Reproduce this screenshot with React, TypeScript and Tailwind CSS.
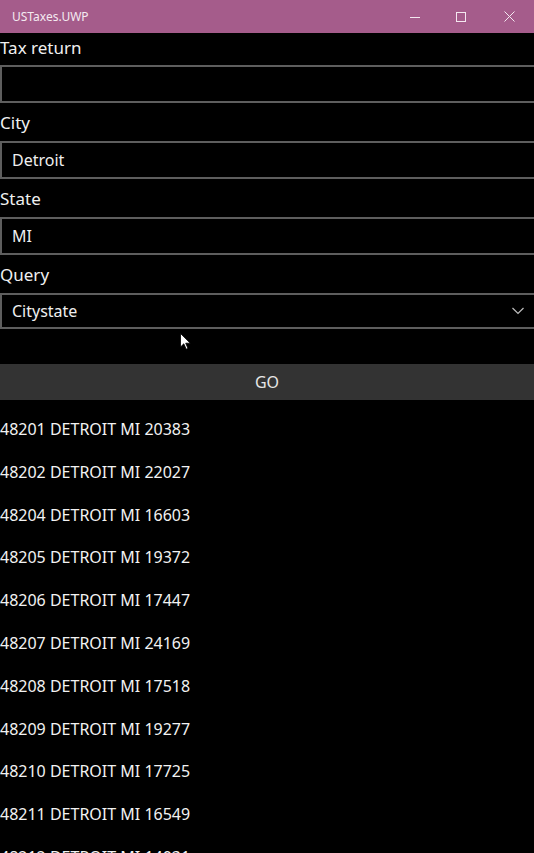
import React from "react";

const rows = [
  "48201 DETROIT MI 20383",
  "48202 DETROIT MI 22027",
  "48204 DETROIT MI 16603",
  "48205 DETROIT MI 19372",
  "48206 DETROIT MI 17447",
  "48207 DETROIT MI 24169",
  "48208 DETROIT MI 17518",
  "48209 DETROIT MI 19277",
  "48210 DETROIT MI 17725",
  "48211 DETROIT MI 16549",
  "48212 DETROIT MI 14031",
];

function Label({ children, first }: { children: React.ReactNode; first?: boolean }) {
  return (
    <div
      className={
        first
          ? "h-[32px] pb-[4px] flex items-center text-[17px] text-[#f0f0f0] leading-none"
          : "h-[38px] flex items-center text-[17px] text-[#f0f0f0] leading-none"
      }
    >
      {children}
    </div>
  );
}

function Field({ value }: { value?: string }) {
  return (
    <div className="h-[38px] border-y-2 border-l-2 border-[#5e5e5e] flex items-center pl-[10px] text-[16px] text-[#efefef]">
      {value}
    </div>
  );
}

export default function App() {
  return (
    <div
      className="w-[534px] h-[853px] bg-black overflow-hidden relative"
      style={{ fontFamily: '"Noto Sans", "Open Sans", sans-serif' }}
    >
      <div className="h-[33px] bg-[#a55c8b] flex items-center">
        <div className="pl-[12px] text-[12px] text-[#f4eaf1] flex-1">USTaxes.UWP</div>
        <div className="flex h-full">
          <div className="w-[46px] h-full flex items-center justify-center">
            <svg width="10" height="10" viewBox="0 0 10 10">
              <line x1="0" y1="5.5" x2="10" y2="5.5" stroke="#f4e8f0" strokeWidth="1" />
            </svg>
          </div>
          <div className="w-[46px] h-full flex items-center justify-center">
            <svg width="10" height="10" viewBox="0 0 10 10">
              <rect x="0.5" y="0.5" width="9" height="9" fill="none" stroke="#f4e8f0" strokeWidth="1" />
            </svg>
          </div>
          <div className="w-[50px] h-full flex items-center justify-center">
            <svg width="11" height="11" viewBox="0 0 11 11">
              <path d="M0.5 0.5 L10.5 10.5 M10.5 0.5 L0.5 10.5" stroke="#f4e8f0" strokeWidth="1" />
            </svg>
          </div>
        </div>
      </div>

      <Label first>Tax return</Label>
      <Field />
      <Label>City</Label>
      <Field value="Detroit" />
      <Label>State</Label>
      <Field value="MI" />
      <Label>Query</Label>
      <div className="h-[36px] border-2 border-r-0 border-[#5e5e5e] flex items-center pl-[10px] pr-[10px] text-[16px] text-[#efefef]">
        <span className="flex-1">Citystate</span>
        <svg width="12" height="8" viewBox="0 0 12 8">
          <path d="M0.5 1 L6 6.5 L11.5 1" fill="none" stroke="#bdbdbd" strokeWidth="1.2" />
        </svg>
      </div>

      <div className="h-[35px]" />
      <div className="h-[36px] bg-[#333333] flex items-center justify-center text-[16px] text-[#e6e6e6]">GO</div>

      <div className="pt-[7.6px] flex flex-col">
        {rows.map((r) => (
          <div key={r} className="h-[42.8px] shrink-0 flex items-center text-[16px] text-[#f2f2f2] whitespace-nowrap">
            {r}
          </div>
        ))}
      </div>

      <svg className="absolute left-[180px] top-[333px]" width="12" height="18" viewBox="0 0 12 18">
        <path d="M0.5 0.5 L0.5 14 L3.8 10.8 L6.2 16.2 L8 15.4 L5.7 10.2 L10.3 10.2 Z" fill="#ffffff" stroke="#000" strokeWidth="0.8" />
      </svg>
    </div>
  );
}
